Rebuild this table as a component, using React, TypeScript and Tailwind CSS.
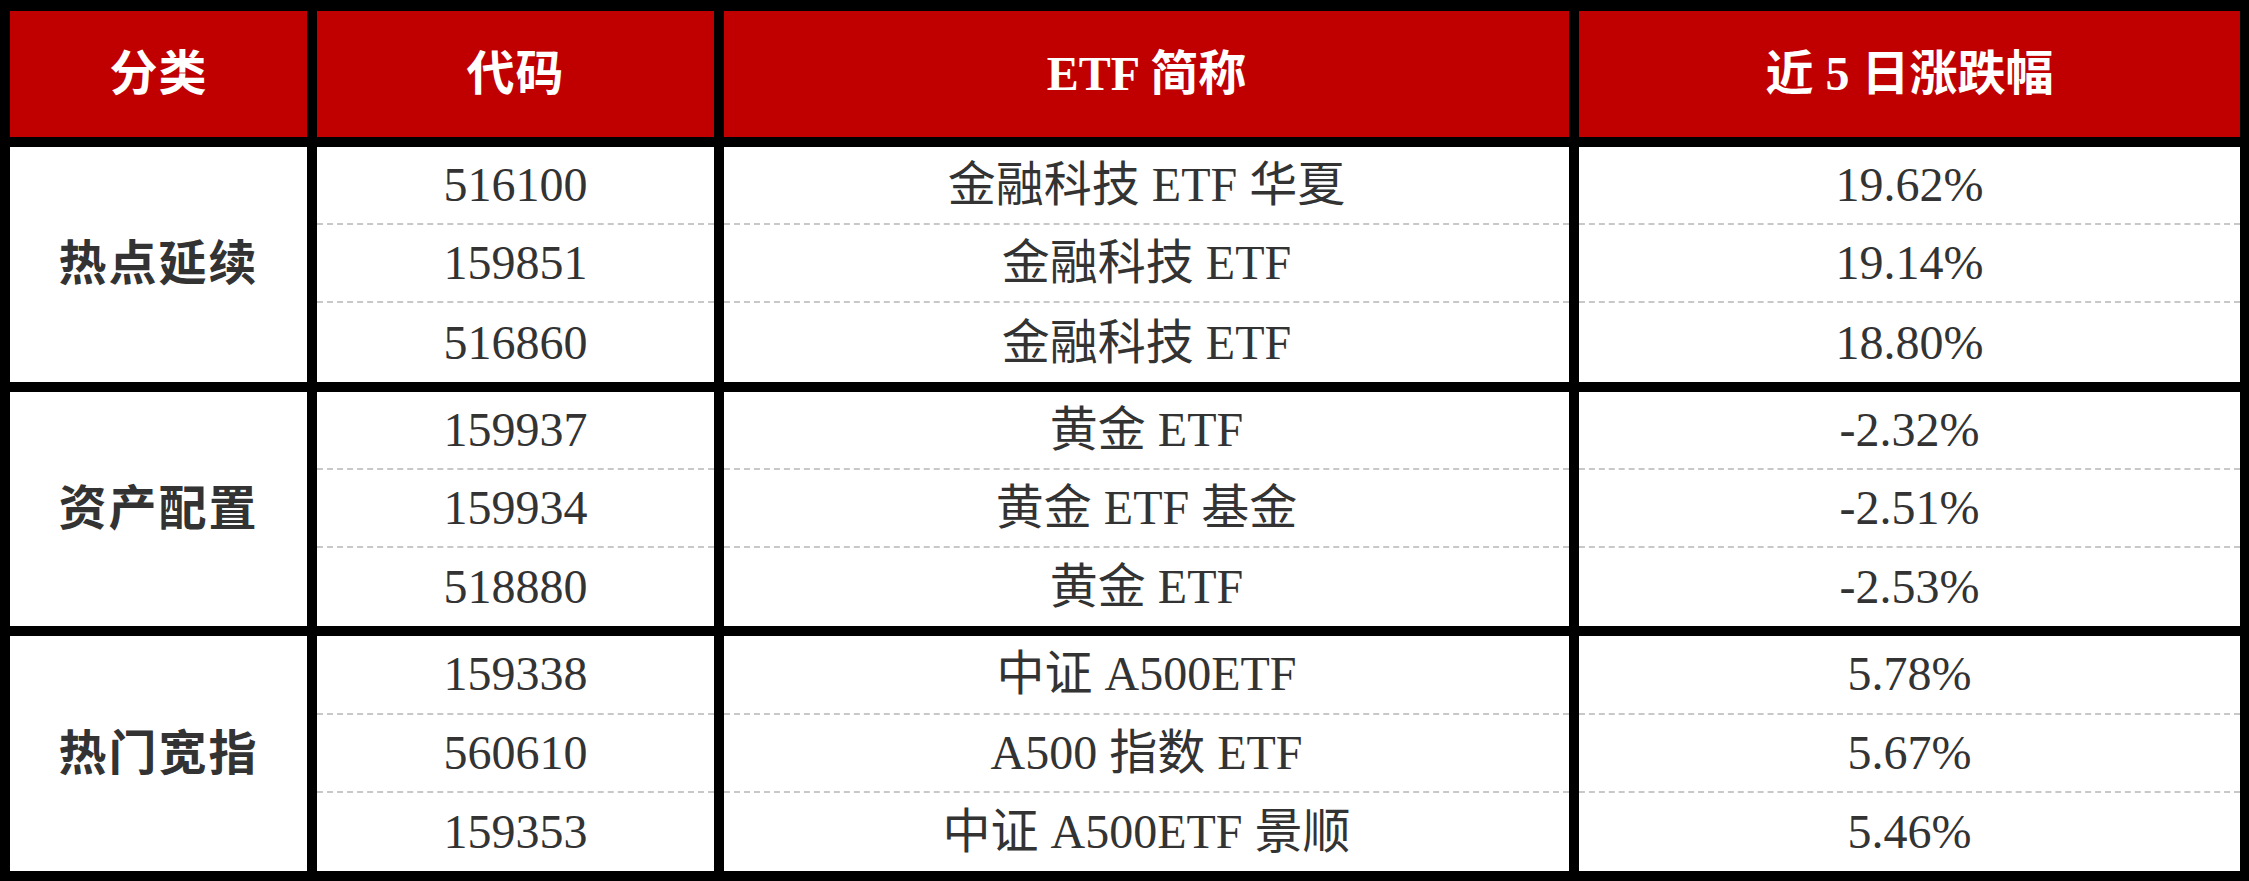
const groups = [
  {
    label: '热点延续',
    rows: [
      { code: '516100', name: '金融科技 ETF 华夏', pct: '19.62%' },
      { code: '159851', name: '金融科技 ETF', pct: '19.14%' },
      { code: '516860', name: '金融科技 ETF', pct: '18.80%' },
    ],
  },
  {
    label: '资产配置',
    rows: [
      { code: '159937', name: '黄金 ETF', pct: '-2.32%' },
      { code: '159934', name: '黄金 ETF 基金', pct: '-2.51%' },
      { code: '518880', name: '黄金 ETF', pct: '-2.53%' },
    ],
  },
  {
    label: '热门宽指',
    rows: [
      { code: '159338', name: '中证 A500ETF', pct: '5.78%' },
      { code: '560610', name: 'A500 指数 ETF', pct: '5.67%' },
      { code: '159353', name: '中证 A500ETF 景顺', pct: '5.46%' },
    ],
  },
];

const font = "font-['Liberation_Serif','Noto_Sans_CJK_SC',serif]";

export default function App() {
  return (
    <div
      className={`flex h-[881px] w-[2249px] flex-col gap-[10px] bg-black pt-[11px] pr-[9px] pb-[10px] pl-[10px] ${font} text-[48px] leading-none`}
    >
      {/* header */}
      <div className="flex h-[126px] shrink-0 gap-[10px] font-bold text-white">
        <div className="flex w-[297px] items-center justify-center bg-[#c00000] tracking-[1px]">分类</div>
        <div className="flex w-[397px] items-center justify-center bg-[#c00000] tracking-[1px]">代码</div>
        <div className="flex flex-1 items-center justify-center bg-[#c00000]">ETF 简称</div>
        <div className="flex w-[661px] items-center justify-center bg-[#c00000]">近 5 日涨跌幅</div>
      </div>

      {groups.map((g) => (
        <div key={g.label} className="flex flex-1 gap-[10px]">
          <div className="flex w-[297px] items-center justify-center bg-white font-bold tracking-[2px] text-[#333]">
            {g.label}
          </div>
          <div className="flex flex-1 flex-col">
            {g.rows.map((r, i) => {
              const line = i < 2 ? 'border-b-2 border-dashed border-[#c8c8c8]' : '';
              return (
                <div key={r.code} className="flex flex-1 gap-[10px] text-[#333]">
                  <div className={`flex w-[397px] items-center justify-center bg-white ${line}`}>{r.code}</div>
                  <div className={`flex flex-1 items-center justify-center bg-white ${line}`}>{r.name}</div>
                  <div className={`flex w-[661px] items-center justify-center bg-white ${line}`}>{r.pct}</div>
                </div>
              );
            })}
          </div>
        </div>
      ))}
    </div>
  );
}
